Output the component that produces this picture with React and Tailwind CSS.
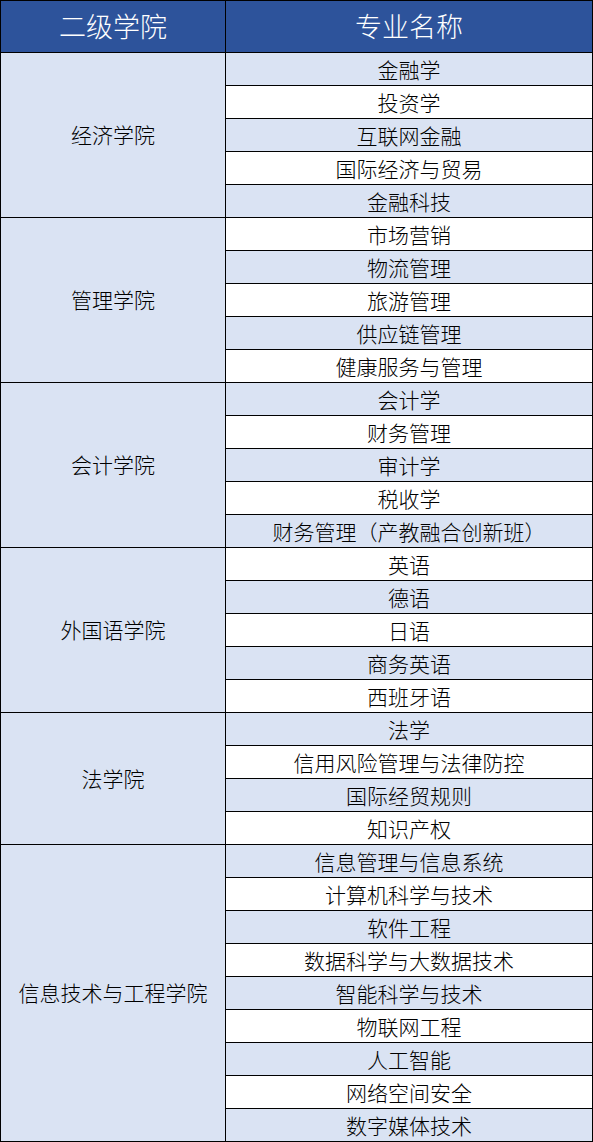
const groups = [
  { name: "经济学院", majors: ["金融学", "投资学", "互联网金融", "国际经济与贸易", "金融科技"] },
  { name: "管理学院", majors: ["市场营销", "物流管理", "旅游管理", "供应链管理", "健康服务与管理"] },
  { name: "会计学院", majors: ["会计学", "财务管理", "审计学", "税收学", "财务管理（产教融合创新班）"] },
  { name: "外国语学院", majors: ["英语", "德语", "日语", "商务英语", "西班牙语"] },
  { name: "法学院", majors: ["法学", "信用风险管理与法律防控", "国际经贸规则", "知识产权"] },
  {
    name: "信息技术与工程学院",
    majors: [
      "信息管理与信息系统",
      "计算机科学与技术",
      "软件工程",
      "数据科学与大数据技术",
      "智能科学与技术",
      "物联网工程",
      "人工智能",
      "网络空间安全",
      "数字媒体技术",
    ],
  },
];

const font = { fontFamily: '"Noto Sans CJK SC", "Noto Sans", sans-serif' };

export default function App() {
  let idx = 0;
  return (
    <div className="w-[593px] bg-black p-px flex flex-col gap-px text-black font-light" style={font}>
      {/* header */}
      <div className="flex gap-px h-[51px]">
        <div className="w-[224px] bg-[#2D539B] text-white text-[27px] flex items-center justify-center">
          二级学院
        </div>
        <div className="flex-1 bg-[#2D539B] text-white text-[27px] flex items-center justify-center">
          专业名称
        </div>
      </div>

      {groups.map((g) => (
        <div key={g.name} className="flex gap-px">
          <div className="w-[224px] bg-[#DAE3F3] text-[21px] flex items-center justify-center">
            {g.name}
          </div>
          <div className="flex-1 flex flex-col gap-px">
            {g.majors.map((m) => {
              const even = idx % 2 === 0;
              idx++;
              return (
                <div
                  key={m}
                  className={
                    "h-[32px] text-[21px] leading-none flex items-center justify-center pt-px " +
                    (even ? "bg-[#DAE3F3]" : "bg-white")
                  }
                >
                  {m}
                </div>
              );
            })}
          </div>
        </div>
      ))}
    </div>
  );
}
